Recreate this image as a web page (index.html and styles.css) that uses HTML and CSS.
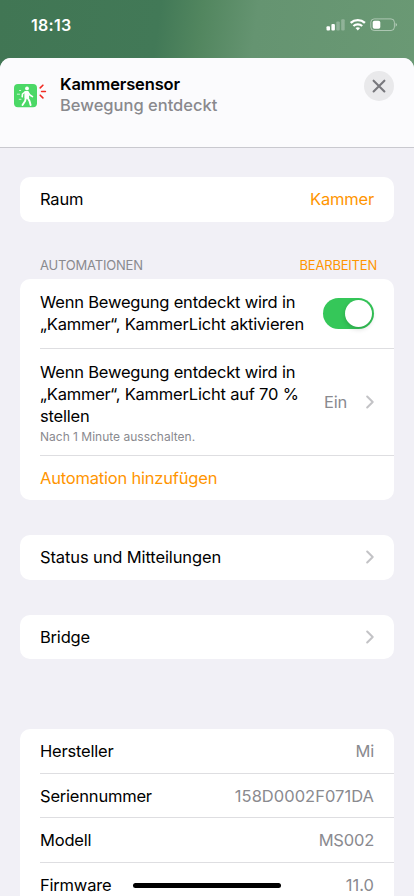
FILE: index.html
```html
<!DOCTYPE html>
<html lang="de">
<head>
<meta charset="utf-8">
<meta name="viewport" content="width=device-width, initial-scale=1">
<title>Kammersensor</title>
<link rel="stylesheet" href="styles.css">
</head>
<body>
<div class="statusbar">
  <span class="time">18:13</span>
  <svg class="indicators" width="72" height="14" viewBox="0 0 72 14" fill="#fff">
    <rect x="0.5" y="8.2" width="3.5" height="4.4" rx="1"/>
    <rect x="5.4" y="6" width="3.5" height="6.6" rx="1"/>
    <rect x="10.3" y="3.6" width="3.5" height="9" rx="1" opacity=".27"/>
    <rect x="15.2" y="1.2" width="3.5" height="11.4" rx="1" opacity=".27"/>
    <path d="M24.7 4.9a10.6 10.6 0 0 1 14.2 0" fill="none" stroke="#fff" stroke-width="2.4"/>
    <path d="M27.4 8a6.5 6.5 0 0 1 8.8 0" fill="none" stroke="#fff" stroke-width="2.2"/>
    <path d="M29.5 10.1a3.6 3.6 0 0 1 4.6 0L31.8 12.6z"/>
    <rect x="44.8" y="0.9" width="23.6" height="11.6" rx="3.4" fill="none" stroke="#fff" opacity=".45"/>
    <rect x="46.7" y="2.8" width="7.6" height="8" rx="1.8"/>
    <path d="M69.6 4.8q2.8 2 0 4z" opacity=".5"/>
  </svg>
</div>
<main class="sheet">
  <header class="head">
    <svg class="sensor" width="34" height="26" viewBox="0 0 34 26">
      <rect x="0" y="2" width="23" height="23.3" rx="4" fill="#4bd866"/>
      <g fill="none" stroke="#fff" stroke-linecap="round" stroke-linejoin="round">
        <circle cx="13" cy="6.4" r="1.9" fill="#fff" stroke="none"/>
        <path d="M11.3 10l2.4-.2.6 5.8-3 .3z" fill="#fff" stroke-width="1.8"/>
        <path d="M11 10l-2.5 2-.3 2.8M14 10.2l1.9 2.8 2.6 1.6" stroke-width="1.6"/>
        <path d="M11.9 15.8l-.8 3.2-2.6 4M13.6 15.8l1.9 3.2 1.1 4" stroke-width="1.9"/>
        <path d="M5.5 8.5h1.2M3.3 12.2h2.3M5.2 17.3h1.8" stroke-width=".9" opacity=".8"/>
      </g>
      <path d="M26.2 5.9l2.7-2.7M27.6 9.5h3.8M26.2 13.2l2.7 2.7" fill="none" stroke="#f02b22" stroke-width="1.6" stroke-linecap="round"/>
    </svg>
    <div class="titles">
      <h1>Kammersensor</h1>
      <p class="state">Bewegung entdeckt</p>
    </div>
    <button class="close" aria-label="Schließen">
      <svg width="30" height="30" viewBox="0 0 30 30"><path d="M9.6 9.7l10.8 10.8M20.4 9.7L9.6 20.5" stroke="#78787d" stroke-width="2.1" stroke-linecap="round"/></svg>
    </button>
  </header>

  <section class="card room">
    <div class="row"><span>Raum</span><span class="accent">Kammer</span></div>
  </section>

  <div class="caption"><span class="muted">AUTOMATIONEN</span><span class="accent">BEARBEITEN</span></div>
  <section class="card automations">
    <div class="row first">
      <p class="rule">Wenn Bewegung entdeckt wird in<br>„Kammer“, KammerLicht aktivieren</p>
      <span class="toggle"></span>
    </div>
    <div class="row second">
      <div>
        <p class="rule">Wenn Bewegung entdeckt wird in<br>„Kammer“, KammerLicht auf 70 %<br>stellen</p>
        <p class="note">Nach 1 Minute ausschalten.</p>
      </div>
      <span class="value on">Ein</span>
      <svg class="chevron" width="8" height="14" viewBox="0 0 8 14"><path d="M1.2 1.5L6.7 7l-5.5 5.5"/></svg>
    </div>
    <div class="row add"><span class="accent">Automation hinzufügen</span></div>
  </section>

  <section class="card status">
    <div class="row"><span class="wide">Status und Mitteilungen</span><svg class="chevron" width="8" height="14" viewBox="0 0 8 14"><path d="M1.2 1.5L6.7 7l-5.5 5.5"/></svg></div>
  </section>
  <section class="card bridge">
    <div class="row"><span>Bridge</span><svg class="chevron" width="8" height="14" viewBox="0 0 8 14"><path d="M1.2 1.5L6.7 7l-5.5 5.5"/></svg></div>
  </section>

  <section class="card info">
    <div class="row"><span>Hersteller</span><span class="value">Mi</span></div>
    <div class="row"><span>Seriennummer</span><span class="value serial">158D0002F071DA</span></div>
    <div class="row"><span>Modell</span><span class="value">MS002</span></div>
    <div class="row"><span>Firmware</span><span class="value serial">11.0</span></div>
  </section>
</main>
<div class="home"></div>
</body>
</html>
```
FILE: styles.css
```css
* { box-sizing: border-box; }
html, body { height: 100%; }
body {
  margin: 0;
  display: flex;
  flex-direction: column;
  overflow: hidden;
  background: linear-gradient(98deg, #417654 0%, #427957 38%, #52865f 48%, #659471 61%, #6a9974 100%) top / 100% 80px no-repeat #f1f0f6;
  font: 400 16.5px/22px Inter, "Liberation Sans", sans-serif;
  letter-spacing: -0.2px;
  color: #000;
}
h1, p { margin: 0; }
.statusbar {
  flex: none;
  height: 58px;
  display: flex;
  justify-content: space-between;
  align-items: flex-start;
  padding: 14px 16px 0 31px;
  color: #fff;
}
.time { font-size: 16px; font-weight: 600; letter-spacing: 0.3px; }
.indicators { margin: 4px 0 0; }
.sheet {
  flex: 1;
  min-height: 0;
  overflow: hidden;
  border-radius: 11px 11px 0 0;
  background: #f1f0f6;
}
.head {
  height: 90px;
  display: flex;
  align-items: flex-start;
  padding: 0 20px 0 14px;
  background: #fbfbfd;
  border-bottom: 1px solid #c9c9cf;
}
.sensor { margin-top: 24px; }
.titles { flex: 1; padding: 16px 0 0 12px; }
h1 { font-size: 16.5px; line-height: 21px; font-weight: 600; letter-spacing: -0.15px; }
.state { color: #89898d; font-size: 16.5px; line-height: 20px; font-weight: 500; letter-spacing: 0; }
.close {
  width: 30px;
  height: 30px;
  margin-top: 13px;
  padding: 0;
  border: 0;
  border-radius: 50%;
  background: #e9e9eb;
}
.close svg { display: block; }
.card {
  margin: 0 20px;
  padding-left: 20px;
  border-radius: 10px;
  background: #fff;
}
.row {
  height: 44.5px;
  display: flex;
  align-items: center;
  justify-content: space-between;
  padding-right: 20px;
}
.row + .row { border-top: 1px solid #dedee1; }
.room { margin-top: 29px; }
.accent { color: #ff9500; }
.muted, .value { color: #8a8a8f; }
.caption {
  height: 57.5px;
  display: flex;
  justify-content: space-between;
  padding: 34px 37px 0 40px;
  font-size: 13px;
  line-height: 18px;
  letter-spacing: -0.2px;
}
.first { height: 69px; }
.second { height: 107px; }
.second > div { padding-top: 2px; }
.first .rule { margin-top: -2px; }
.toggle {
  width: 51px;
  height: 31px;
  flex: none;
  display: flex;
  justify-content: flex-end;
  padding: 2px;
  border-radius: 16px;
  background: #35c759;
}
.toggle::after {
  content: "";
  width: 27px;
  height: 27px;
  border-radius: 50%;
  background: #fff;
  box-shadow: 0 2px 5px rgba(0, 0, 0, .18);
}
.rule { white-space: nowrap; }
.note {
  padding-top: 1px;
  color: #8a8a8f;
  font-size: 12px;
  line-height: 18px;
  letter-spacing: 0;
}
.on { margin-left: auto; margin-right: 19px; }
.serial { letter-spacing: 0.03px; }
.wide { letter-spacing: -0.12px; }
.chevron {
  flex: none;
  fill: none;
  stroke: #c3c3c6;
  stroke-width: 2;
  stroke-linecap: round;
  stroke-linejoin: round;
}
.status { margin-top: 35.5px; }
.bridge { margin-top: 35px; }
.info { margin-top: 70px; height: 190px; }
.info .row { height: 44.6px; }
.info .row:first-child { height: 43.8px; }
.home {
  position: absolute;
  left: 133px;
  top: 883px;
  width: 148px;
  height: 5px;
  border-radius: 3px;
  background: #000;
}
```
